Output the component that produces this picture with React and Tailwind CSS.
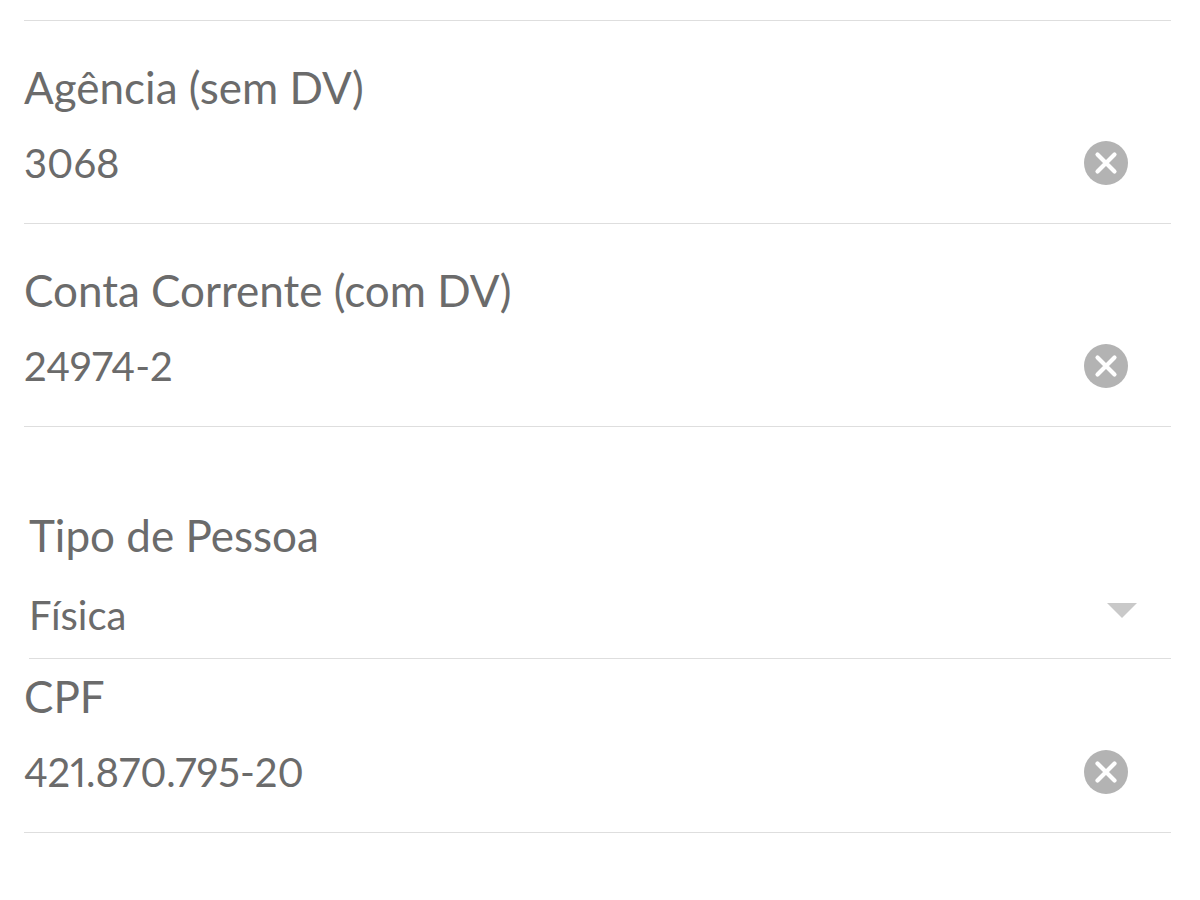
import React, { useState } from 'react';

const ClearIcon = () => (
  <svg viewBox="0 0 44 44" className="size-11" aria-hidden="true">
    <circle cx="22" cy="22" r="22" fill="#b3b3b3" />
    <path d="M13.5 13.5 L30.5 30.5 M30.5 13.5 L13.5 30.5" stroke="#fff" strokeWidth="4.2" strokeLinecap="round" fill="none" />
  </svg>
);

const TextField = ({ id, label, value, onChange, className }) => (
  <div className={`ml-6 border-b border-[#dedede] pb-8 ${className}`}>
    <label htmlFor={id} className="block text-[44px] leading-[56px]">{label}</label>
    <div className="mt-5 flex h-14 items-center pr-[43px]">
      <input
        id={id}
        type="text"
        value={value}
        onChange={(e) => onChange(e.target.value)}
        className="h-14 min-w-0 flex-1 bg-transparent text-[40px] leading-[56px] proportional-nums focus:outline-none"
      />
      <button type="button" onClick={() => onChange('')} aria-label="Limpar">
        <ClearIcon />
      </button>
    </div>
  </div>
);

const App = () => {
  const [agencia, setAgencia] = useState('3068');
  const [conta, setConta] = useState('24974-2');
  const [tipo, setTipo] = useState('Física');
  const [cpf, setCpf] = useState('421.870.795-20');

  return (
    <form className="min-h-screen bg-white pt-5 pr-[29px] font-[Lato,sans-serif] text-[#6b6b6b]">
      <div className="ml-6 border-t border-[#dedede]" />

      <TextField id="agencia" label="Agência (sem DV)" value={agencia} onChange={setAgencia} className="pt-[38px]" />
      <TextField id="conta" label="Conta Corrente (com DV)" value={conta} onChange={setConta} className="pt-[38px]" />

      {/* Person type */}
      <div className="ml-[29px] border-b border-[#dedede] pt-20 pb-[15px]">
        <label htmlFor="tipo" className="block text-[44px] leading-[56px]">Tipo de Pessoa</label>
        <div className="relative mt-6">
          <select
            id="tipo"
            value={tipo}
            onChange={(e) => setTipo(e.target.value)}
            className="block h-14 w-full appearance-none bg-transparent text-[40px] leading-[56px] focus:outline-none"
          >
            <option>Física</option>
            <option>Jurídica</option>
          </select>
          <svg viewBox="0 0 30 15" className="pointer-events-none absolute top-4 right-[34px] h-[15px] w-[30px]" aria-hidden="true">
            <path d="M0 0 H30 L15 15 Z" fill="#c9c9c9" />
          </svg>
        </div>
      </div>

      <TextField id="cpf" label="CPF" value={cpf} onChange={setCpf} className="pt-[9px]" />
    </form>
  );
};

export default App;
